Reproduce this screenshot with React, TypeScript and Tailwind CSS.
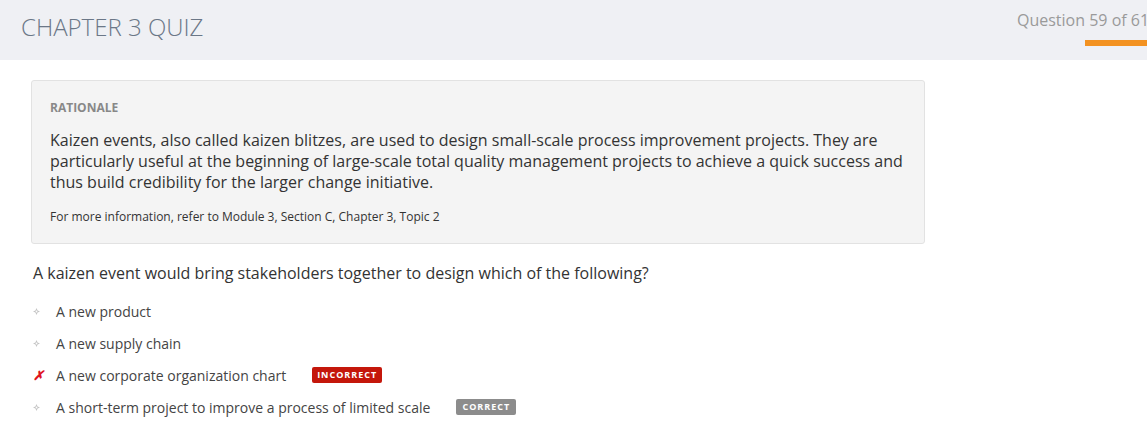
import React from "react";

const Bullet = () => (
  <svg width="7" height="7" viewBox="0 0 7 7" className="shrink-0">
    <path d="M3.5 0 L4.6 2.4 L7 3.5 L4.6 4.6 L3.5 7 L2.4 4.6 L0 3.5 L2.4 2.4 Z" fill="#c4c4c4" />
    <circle cx="3.5" cy="3.5" r="0.9" fill="#ffffff" />
  </svg>
);

const Cross = () => (
  <span className="w-[7px] text-[13px] font-bold leading-none text-[#e0141e] italic">✗</span>
);

type Opt = { text: string; mark: "none" | "x"; badge?: "incorrect" | "correct" };

const options: Opt[] = [
  { text: "A new product", mark: "none" },
  { text: "A new supply chain", mark: "none" },
  { text: "A new corporate organization chart", mark: "x", badge: "incorrect" },
  { text: "A short-term project to improve a process of limited scale", mark: "none", badge: "correct" },
];

export default function App() {
  return (
    <div className="w-[1147px] h-[423px] overflow-hidden bg-white font-['Open_Sans',sans-serif]">
      <header className="h-[60px] bg-[#eff0f4] flex justify-between">
        <h1 className="pl-[21px] pt-[11px] text-[24px] font-light leading-[32px] text-[#6b7787]">
          CHAPTER 3 QUIZ
        </h1>
        <div className="flex flex-col items-end pt-[9px] w-[130px] shrink-0">
          <div className="text-[16px] leading-[22px] text-[#9a9a9a] whitespace-nowrap self-start">Question 59 of 61</div>
          <div className="mt-[9px] self-end h-[6px] w-[62px] bg-[#f39221]" />
        </div>
      </header>

      <div className="pl-[31px] pt-[20px] w-[925px]">
        <div className="rounded-[3px] border border-[#e2e2e2] bg-[#f4f4f4] pl-[18px] pr-[18px] pt-[19px] pb-[18px]">
          <div className="text-[12px] font-bold leading-[16px] text-[#888888]">RATIONALE</div>
          <p className="mt-[14px] text-[16px] leading-[21px] text-[#333333]">
            Kaizen events, also called kaizen blitzes, are used to design small-scale process improvement projects. They are particularly useful at the beginning of large-scale total quality management projects to achieve a quick success and thus build credibility for the larger change initiative.
          </p>
          <p className="mt-[16px] text-[12px] leading-[16px] text-[#333333]">
            For more information, refer to Module 3, Section C, Chapter 3, Topic 2
          </p>
        </div>
      </div>

      <div className="pl-[33px] pt-[18px] text-[16px] leading-[22px] text-[#333333]">
        A kaizen event would bring stakeholders together to design which of the following?
      </div>

      <ul className="pt-[11px] pl-[32px]">
        {options.map((o, i) => (
          <li key={i} className="h-[32px] flex items-center text-[14px] text-[#444444]">
            <span className="w-[24px] flex items-center justify-start pl-[1px]">
              {o.mark === "x" ? <Cross /> : <Bullet />}
            </span>
            <span>{o.text}</span>
            {o.badge === "incorrect" && (
              <span className="ml-[26px] h-[16px] rounded-[2px] bg-[#c4170b] text-white text-[9px] font-bold tracking-[1px] leading-[16px] w-[70px] text-center">
                INCORRECT
              </span>
            )}
            {o.badge === "correct" && (
              <span className="ml-[26px] h-[16px] rounded-[2px] bg-[#8c8c8c] text-white text-[9px] font-bold tracking-[1px] leading-[16px] w-[60px] text-center">
                CORRECT
              </span>
            )}
          </li>
        ))}
      </ul>
    </div>
  );
}
